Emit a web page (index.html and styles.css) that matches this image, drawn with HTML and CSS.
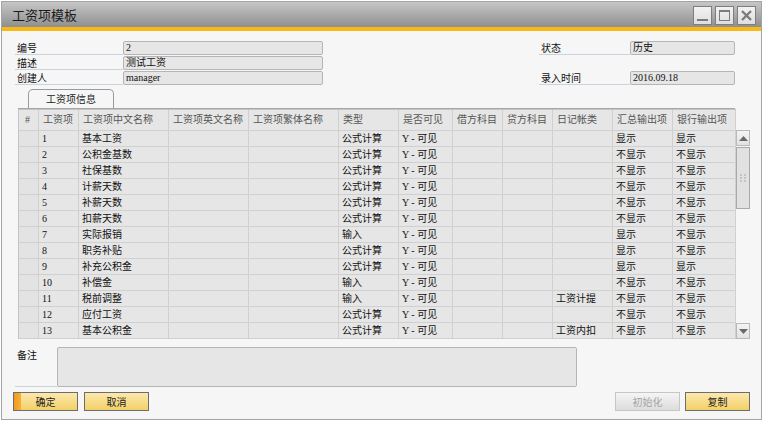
FILE: index.html
```html
<!DOCTYPE html>
<html lang="zh-CN">
<head>
<meta charset="utf-8">
<title>工资项模板</title>
<link rel="stylesheet" href="styles.css">
</head>
<body>
<div class="window">
  <div class="titlebar">
    <div class="title">工资项模板</div>
    <div class="winbtns">
      <div class="winbtn"><svg width="17" height="17" viewBox="0 0 17 17"><rect x="3" y="12" width="11" height="2" fill="#7b7b7b"/></svg></div>
      <div class="winbtn"><svg width="17" height="17" viewBox="0 0 17 17"><rect x="3.5" y="3.5" width="10" height="10" fill="none" stroke="#7b7b7b" stroke-width="1"/><rect x="3" y="3" width="11" height="2" fill="#7b7b7b"/></svg></div>
      <div class="winbtn"><svg width="17" height="17" viewBox="0 0 17 17"><path d="M4 4 L13 13 M13 4 L4 13" stroke="#7b7b7b" stroke-width="2.4"/></svg></div>
    </div>
  </div>
  <div class="accent"></div>
  <div class="content">
    <div class="form">
      <div class="lbl">编号</div><div class="field">2</div><div></div><div class="lbl">状态</div><div class="field">历史</div>
      <div class="lbl">描述</div><div class="field">测试工资</div><div></div><div></div><div></div>
      <div class="lbl">创建人</div><div class="field">manager</div><div></div><div class="lbl">录入时间</div><div class="field">2016.09.18</div>
    </div>
    <div class="tabstrip"><div class="tab">工资项信息</div></div>
    <div class="gridwrap">
      <table class="grid">
        <colgroup>
          <col style="width:20px"><col style="width:40px"><col style="width:90px"><col style="width:80px"><col style="width:90px"><col style="width:60px"><col style="width:54px"><col style="width:50px"><col style="width:50px"><col style="width:60px"><col style="width:60px"><col style="width:63px">
        </colgroup>
        <thead>
          <tr><th class="hash">#</th><th>工资项</th><th>工资项中文名称</th><th>工资项英文名称</th><th>工资项繁体名称</th><th>类型</th><th>是否可见</th><th>借方科目</th><th>贷方科目</th><th>日记帐类</th><th>汇总输出项</th><th>银行输出项</th></tr>
        </thead>
        <tbody>
          <tr><td></td><td>1</td><td>基本工资</td><td></td><td></td><td>公式计算</td><td>Y - 可见</td><td></td><td></td><td></td><td>显示</td><td>显示</td></tr>
          <tr><td></td><td>2</td><td>公积金基数</td><td></td><td></td><td>公式计算</td><td>Y - 可见</td><td></td><td></td><td></td><td>不显示</td><td>不显示</td></tr>
          <tr><td></td><td>3</td><td>社保基数</td><td></td><td></td><td>公式计算</td><td>Y - 可见</td><td></td><td></td><td></td><td>不显示</td><td>不显示</td></tr>
          <tr><td></td><td>4</td><td>计薪天数</td><td></td><td></td><td>公式计算</td><td>Y - 可见</td><td></td><td></td><td></td><td>不显示</td><td>不显示</td></tr>
          <tr><td></td><td>5</td><td>补薪天数</td><td></td><td></td><td>公式计算</td><td>Y - 可见</td><td></td><td></td><td></td><td>不显示</td><td>不显示</td></tr>
          <tr><td></td><td>6</td><td>扣薪天数</td><td></td><td></td><td>公式计算</td><td>Y - 可见</td><td></td><td></td><td></td><td>不显示</td><td>不显示</td></tr>
          <tr><td></td><td>7</td><td>实际报销</td><td></td><td></td><td>输入</td><td>Y - 可见</td><td></td><td></td><td></td><td>显示</td><td>不显示</td></tr>
          <tr><td></td><td>8</td><td>职务补贴</td><td></td><td></td><td>公式计算</td><td>Y - 可见</td><td></td><td></td><td></td><td>显示</td><td>不显示</td></tr>
          <tr><td></td><td>9</td><td>补充公积金</td><td></td><td></td><td>公式计算</td><td>Y - 可见</td><td></td><td></td><td></td><td>显示</td><td>显示</td></tr>
          <tr><td></td><td>10</td><td>补偿金</td><td></td><td></td><td>输入</td><td>Y - 可见</td><td></td><td></td><td></td><td>不显示</td><td>不显示</td></tr>
          <tr><td></td><td>11</td><td>税前调整</td><td></td><td></td><td>输入</td><td>Y - 可见</td><td></td><td></td><td>工资计提</td><td>不显示</td><td>不显示</td></tr>
          <tr><td></td><td>12</td><td>应付工资</td><td></td><td></td><td>公式计算</td><td>Y - 可见</td><td></td><td></td><td></td><td>不显示</td><td>不显示</td></tr>
          <tr><td></td><td>13</td><td>基本公积金</td><td></td><td></td><td>公式计算</td><td>Y - 可见</td><td></td><td></td><td>工资内扣</td><td>不显示</td><td>不显示</td></tr>
        </tbody>
      </table>
      <div class="scrollbar">
        <div class="sbtn"><svg width="9" height="5" viewBox="0 0 9 5"><path d="M0 5 L4.5 0 L9 5 Z" fill="#6a6a6a"/></svg></div>
        <div class="thumb"><svg width="6" height="8" viewBox="0 0 6 8"><g fill="#c4c4c4"><rect x="0" y="0" width="2" height="2"/><rect x="4" y="0" width="2" height="2"/><rect x="0" y="3" width="2" height="2"/><rect x="4" y="3" width="2" height="2"/><rect x="0" y="6" width="2" height="2"/><rect x="4" y="6" width="2" height="2"/></g></svg></div>
        <div class="track"></div>
        <div class="sbtn"><svg width="9" height="5" viewBox="0 0 9 5"><path d="M0 0 L4.5 5 L9 0 Z" fill="#6a6a6a"/></svg></div>
      </div>
    </div>
    <div class="remarks">
      <div class="rlbl">备注</div>
      <div class="rbox"></div>
    </div>
    <div class="buttons">
      <div class="btn primary">确定</div>
      <div class="btn">取消</div>
      <div class="spacer"></div>
      <div class="btn disabled">初始化</div>
      <div class="btn">复制</div>
    </div>
  </div>
</div>
</body>
</html>
```

FILE: styles.css
```css
* { box-sizing: border-box; }
html, body { margin: 0; padding: 0; background: #ffffff; }
body {
  font-family: "Liberation Serif", "Noto Sans CJK SC", serif;
  font-size: 10px;
  color: #111;
}
.window {
  margin: 1px 0 0 1px;
  width: 761px;
  height: 419px;
  border: 1px solid #a4a4a4;
  background: #f6f6f6;
  display: flex;
  flex-direction: column;
}
.titlebar {
  height: 25px;
  flex: none;
  background: linear-gradient(#c6c6c6, #8f8f8f);
  display: flex;
  align-items: flex-start;
  justify-content: space-between;
  padding: 0 5px 0 10px;
}
.title {
  font-family: "Noto Sans CJK SC", sans-serif;
  font-size: 13px;
  line-height: 25px;
  color: #1a1a1a;
}
.winbtns { display: flex; gap: 3px; margin-top: 4px; }
.winbtn {
  width: 19px;
  height: 19px;
  border: 1px solid #7e7e7e;
  background: linear-gradient(#f2f2f2, #dedede);
  display: flex;
  align-items: center;
  justify-content: center;
}
.accent { height: 4px; flex: none; background: #f8b816; }
.content { flex: 1; display: flex; flex-direction: column; padding: 10px 11px 0 0; }

.form {
  display: grid;
  grid-template-columns: 108px 200px 216px 91px 105px;
  grid-auto-rows: 14px;
  row-gap: 1px;
  padding-left: 13px;
}
.lbl {
  font-family: "Noto Sans CJK SC", sans-serif;
  font-size: 10px;
  line-height: 13px;
  padding-left: 2px;
  border-bottom: 1px solid #c9d3de;
}
.field {
  background: #e6e6e6;
  border: 1px solid #b5b5b5;
  border-radius: 2px;
  line-height: 12px;
  padding-left: 2px;
}

.tabstrip {
  margin: 4px 0 0 16px;
  width: 717px;
  height: 20px;
  border-bottom: 1px solid #a8a8a8;
  padding-left: 10px;
}
.tab {
  width: 86px;
  height: 19px;
  border: 1px solid #9a9a9a;
  border-bottom: none;
  border-radius: 5px 5px 0 0;
  background: #f6f6f6;
  text-align: center;
  font-family: "Noto Sans CJK SC", sans-serif;
  line-height: 18px;
  color: #222;
}

.gridwrap { display: flex; margin-left: 16px; }
.grid {
  table-layout: fixed;
  width: 717px;
  border-collapse: separate;
  border-spacing: 0;
  border-left: 1px solid #c4c4c4;
  border-top: 1px solid #c4c4c4;
  background: #e6e6e6;
}
.grid th, .grid td {
  border-right: 1px solid #d0d0d0;
  border-bottom: 1px solid #d0d0d0;
  padding: 0 0 0 3px;
  white-space: nowrap;
  overflow: hidden;
  text-align: left;
  font-weight: normal;
}
.grid th {
  height: 21px;
  line-height: 20px;
  color: #555;
  padding-left: 4px;
}
.grid th.hash { padding-left: 6px; }
.grid td { height: 16px; line-height: 15px; }
.grid td:first-child { background: #e3e3e3; }

.scrollbar {
  width: 17px;
  display: flex;
  flex-direction: column;
  padding-top: 21px;
}
.sbtn {
  height: 16px;
  border: 1px solid #b9b9b9;
  background: linear-gradient(#f4f4f4, #e2e2e2);
  display: flex;
  align-items: center;
  justify-content: center;
}
.thumb {
  height: 62px;
  margin-top: 1px;
  border: 1px solid #a9a9a9;
  background: #e1e1e1;
  display: flex;
  align-items: center;
  justify-content: center;
}
.track { flex: 1; }

.remarks { display: flex; margin: 8px 0 0 13px; height: 40px; }
.rlbl {
  width: 42px;
  padding: 2px 0 0 2px;
  font-family: "Noto Sans CJK SC", sans-serif;
  line-height: 12px;
  border-bottom: 1px solid #c9d3de;
}
.rbox {
  width: 520px;
  background: #e6e6e6;
  border: 1px solid #b5b5b5;
  border-radius: 2px;
}

.buttons { display: flex; gap: 6px; margin: 5px 0 0 11px; }
.spacer { flex: 1; }
.btn {
  width: 65px;
  height: 19px;
  border: 1px solid #6d6d6d;
  background: linear-gradient(#fbe8ae, #f3d067);
  text-align: center;
  font-family: "Noto Sans CJK SC", sans-serif;
  line-height: 17px;
  color: #222;
}
.btn.primary {
  background: linear-gradient(90deg, #f19a1c 0, #f5b03a 7px, transparent 7px), linear-gradient(#fbe8ae, #f3d067);
}
.btn.disabled {
  border-color: #c6c6c6;
  background: linear-gradient(#f5f5f5, #dcdcdc);
  color: #a2a2a2;
  margin-right: -1px;
}
```
